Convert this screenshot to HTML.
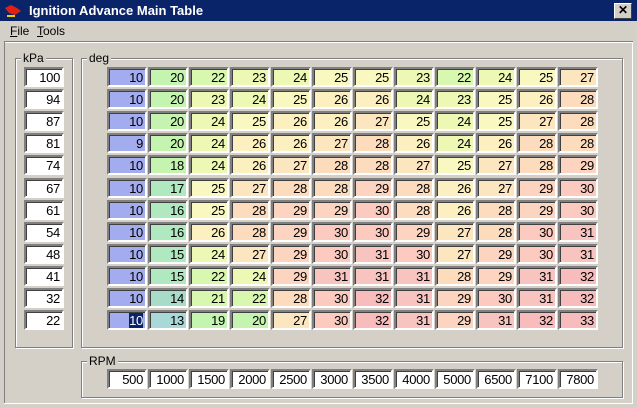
<!DOCTYPE html>
<html><head><style>
body{margin:0;width:637px;height:408px;background:#d4d0c8;position:relative;overflow:hidden;font-family:"Liberation Sans",sans-serif;font-size:12px;}
.abs{position:absolute;}
#title{left:0;top:0;width:637px;height:21px;background:#0a246a;color:#fff;font-weight:bold;font-size:13px;}
#title span{position:absolute;left:29px;top:3px;}
#close{right:5px;top:3px;width:16px;height:14px;background:#d4d0c8;border:1px solid;border-color:#fff #404040 #404040 #fff;color:#000;font-size:12px;line-height:13px;text-align:center;font-weight:bold;}
.menu{top:24px;font-size:12px;}
.grp{border:1px solid #808080;box-shadow:1px 1px 0 #fff, inset 1px 1px 0 #fff;}
.lbl{background:#d4d0c8;padding:0 2px;font-size:12px;}
.c{position:absolute;width:34px;height:16px;border:2px solid;border-color:#808080 #fff #fff #808080;box-shadow:inset 1px 1px 0 #404040;text-align:right;line-height:17px;padding-right:2px;box-sizing:content-box;font-size:13px;letter-spacing:-0.3px;}
.w{background:#fff;}
</style></head><body>
<div id="title" class="abs"><svg class="abs" style="left:3px;top:2px" width="20" height="17"><path d="M2 6 L8 3 L14 6 L18 9 L12 13 L6 11 Z" fill="#e02010"/><path d="M4 14 h8" stroke="#f0d000" stroke-width="2"/></svg><span>Ignition Advance Main Table</span><div id="close" class="abs">✕</div></div>
<div class="abs menu" style="left:10px"><u>F</u>ile</div>
<div class="abs menu" style="left:37px"><u>T</u>ools</div>
<div class="abs" style="left:4px;top:41px;width:629px;height:1px;background:#808080;border-bottom:1px solid #fff"></div>
<div class="abs" style="left:4px;top:42px;width:1px;height:362px;background:#808080"></div>
<div class="abs" style="left:632px;top:42px;width:1px;height:362px;background:#fff"></div>
<div class="abs" style="left:4px;top:403px;width:629px;height:1px;background:#fff"></div>
<div class="abs grp" style="left:15px;top:58px;width:56px;height:288px"></div>
<div class="abs lbl" style="left:21px;top:51px">kPa</div>
<div class="abs grp" style="left:81px;top:58px;width:540px;height:288px"></div>
<div class="abs lbl" style="left:87px;top:51px">deg</div>
<div class="abs grp" style="left:81px;top:361px;width:540px;height:35px"></div>
<div class="abs lbl" style="left:87px;top:354px">RPM</div>
<div id="g"></div>
<script>
var d=[[100,10,20,22,23,24,25,25,23,22,24,25,27],[94,10,20,23,24,25,26,26,24,23,25,26,28],[87,10,20,24,25,26,26,27,25,24,25,27,28],[81,9,20,24,26,26,27,28,26,24,26,28,28],[74,10,18,24,26,27,28,28,27,25,27,28,29],[67,10,17,25,27,28,28,29,28,26,27,29,30],[61,10,16,25,28,29,29,30,28,26,28,29,30],[54,10,16,26,28,29,30,30,29,27,28,30,31],[48,10,15,24,27,29,30,31,30,27,29,30,31],[41,10,15,22,24,29,31,31,31,28,29,31,32],[32,10,14,21,22,28,30,32,31,29,30,31,32],[22,10,13,19,20,27,30,32,31,29,31,32,33]];
var rpm=[500,1000,1500,2000,2500,3000,3500,4000,5000,6500,7100,7800];
function col(v){if(v<=10)return"#a4acf0";if(v<=13)return"#a8d8d8";if(v<=14)return"#a8dcc8";if(v<=17)return"#b0e8c0";if(v<=20)return"#c4f4b0";if(v<=22)return"#d8f8b0";if(v<=24)return"#ecf8b4";if(v<=25)return"#f8f8c0";if(v<=26)return"#fcf0c0";if(v<=27)return"#fce6c0";if(v<=28)return"#fcdcbc";if(v<=29)return"#fcd4c0";if(v<=30)return"#fccabe";if(v<=31)return"#f8c4c0";return"#f8bcbc";}
var h="";
for(var r=0;r<12;r++){var y=67+Math.round(r*22.1);
h+='<div class="c w" style="left:24px;top:'+y+'px">'+d[r][0]+'</div>';
for(var c=0;c<12;c++){var x=107+c*41;var v=d[r][c+1];
var t=(r==11&&c==0)?'<span style="background:#0a246a;color:#fff">10</span>':v;
h+='<div class="c" style="left:'+x+'px;top:'+y+'px;background:'+col(v)+'">'+t+'</div>';}}
for(var c=0;c<12;c++){h+='<div class="c w" style="left:'+(107+c*41)+'px;top:369px">'+rpm[c]+'</div>';}
document.getElementById("g").innerHTML=h;
</script>
</body></html>
